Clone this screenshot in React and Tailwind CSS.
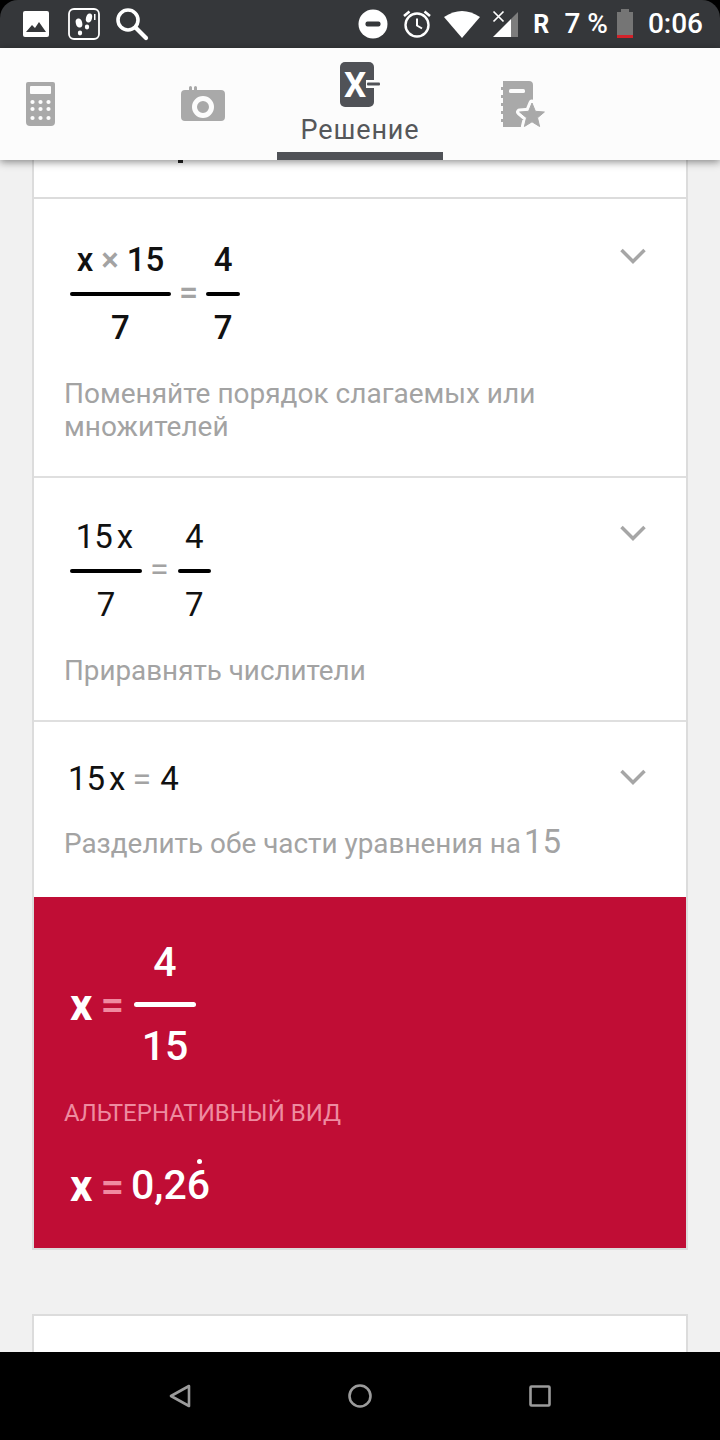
import React from "react";

const font = { fontFamily: "Roboto, sans-serif" };

function Frac({ num, den, w, numCls, denCls }) {
  return (
    <div className="flex flex-col items-center" style={{ width: w }}>
      <div className={`h-[48px] flex items-center justify-center whitespace-nowrap ${numCls}`}>{num}</div>
      <div className="h-[4px] w-full rounded-full bg-black" />
      <div className={`flex items-center justify-center ${denCls}`}>{den}</div>
    </div>
  );
}

function Chevron({ cls }) {
  return (
    <svg width="26" height="16" viewBox="0 0 26 16" className={`shrink-0 ${cls}`}>
      <path d="M1.5 2 L13 13.5 L24.5 2" fill="none" stroke="#a6a6a6" strokeWidth="3.5" />
    </svg>
  );
}

function Row({ children, text, cls, chevCls, textCls }) {
  return (
    <div className={`bg-white pl-[30px] pr-[40px] flex items-start justify-between ${cls}`}>
      <div className="min-w-0">
        {children}
        <div className={`leading-[33px] text-[#a3a3a3] ${textCls}`}>{text}</div>
      </div>
      <Chevron cls={chevCls} />
    </div>
  );
}

function StatusBar() {
  return (
    <div className="h-12 bg-[#35373a] rounded-t-[18px] flex items-center text-white shrink-0">
      <div className="flex items-center pl-[22px] gap-[18px]">
        <svg width="28" height="28" viewBox="0 0 28 28">
          <rect x="1" y="1" width="26" height="26" rx="2" fill="#fff" />
          <path d="M4 22 L10 15 L13 18 L17 12 L24 22 Z" fill="#35373a" />
        </svg>
        <svg width="32" height="32" viewBox="0 0 32 32">
          <rect x="1" y="1" width="30" height="30" rx="5" fill="none" stroke="#fff" strokeWidth="1.8" />
          <ellipse cx="11" cy="15" rx="3.2" ry="4.6" fill="#fff" transform="rotate(-15 11 15)" />
          <ellipse cx="12" cy="25" rx="2.2" ry="2.4" fill="#fff" />
          <ellipse cx="21" cy="10" rx="3" ry="4.6" fill="#fff" transform="rotate(15 21 10)" />
          <ellipse cx="19" cy="19" rx="2.2" ry="2.4" fill="#fff" />
          <rect x="26" y="6" width="1.5" height="6" fill="#fff" />
        </svg>
        <svg width="34" height="34" viewBox="0 0 34 34" className="-ml-[3px]">
          <circle cx="13" cy="13" r="10" fill="none" stroke="#fff" strokeWidth="3.6" />
          <path d="M20.5 20.5 L31 31" stroke="#fff" strokeWidth="4.2" strokeLinecap="round" />
        </svg>
      </div>
      <div className="ml-auto flex items-center pr-[17px]">
        <svg width="30" height="30" viewBox="0 0 30 30">
          <circle cx="15" cy="15" r="14.5" fill="#fff" />
          <rect x="7.5" y="12.5" width="15" height="5" rx="2" fill="#35373a" />
        </svg>
        <svg width="30" height="30" viewBox="0 0 30 30" className="ml-[14px]">
          <circle cx="15" cy="16" r="11.5" fill="none" stroke="#fff" strokeWidth="2.4" />
          <path d="M15 9.5 V16.5 L20 19.5" fill="none" stroke="#fff" strokeWidth="2" />
          <path d="M2 7 L7.5 2.5 M28 7 L22.5 2.5" stroke="#fff" strokeWidth="2.6" />
        </svg>
        <svg width="36" height="28" viewBox="0 0 36 28" className="ml-[12px]">
          <path d="M0 7 Q18 -5 36 7 L18 28 Z" fill="#fff" />
        </svg>
        <svg width="28" height="28" viewBox="0 0 28 28" className="ml-[12px]">
          <path d="M1 27 L19 9 V27 Z" fill="#fff" />
          <path d="M19 9 L26 2 V27 H19 Z" fill="#7d7d7d" />
          <path d="M1.5 1.5 L11.5 11.5 M11.5 1.5 L1.5 11.5" stroke="#fff" strokeWidth="1.7" />
        </svg>
        <span className="ml-[13px] text-[25px] font-bold leading-none">R</span>
        <span className="ml-[15px] text-[28px] font-medium leading-none whitespace-nowrap">7 %</span>
        <svg width="16" height="30" viewBox="0 0 16 30" className="ml-[9px]">
          <rect x="4" y="0" width="8" height="3" fill="#757575" />
          <rect x="0" y="3" width="16" height="25" fill="#757575" />
          <rect x="0" y="26" width="16" height="3" fill="#d3222a" />
        </svg>
        <span className="ml-[15px] text-[28px] font-medium leading-none">0:06</span>
      </div>
    </div>
  );
}

function Header() {
  return (
    <div className="h-[112px] bg-[#fcfcfc] shadow-[0_2px_8px_rgba(0,0,0,0.45)] relative z-10 flex shrink-0">
      <div className="w-[120px] pl-[26px] pt-[34px]">
        <svg width="29" height="44" viewBox="0 0 29 44">
          <path d="M0 2 Q0 0 2 0 H27 Q29 0 29 2 V40 Q29 44 25 44 H4 Q0 44 0 40 Z" fill="#a9a9a9" />
          <rect x="4" y="4" width="21" height="8" rx="1" fill="#fcfcfc" />
          {[20, 27, 36].map((y) => [6.5, 14.5, 22.5].map((x) => <circle key={`${x}-${y}`} cx={x} cy={y} r="2.1" fill="#fcfcfc" />))}
        </svg>
      </div>
      <div className="w-[157px] pl-[61px] pt-[38px]">
        <svg width="44" height="36" viewBox="0 0 44 36">
          <path d="M4 4 H8 V1.5 a1.5 1.5 0 0 1 3 0 V4 H13 V1.5 a1.5 1.5 0 0 1 3 0 V4 H40 Q44 4 44 8 V31 Q44 35 40 35 H4 Q0 35 0 31 V8 Q0 4 4 4 Z" fill="#a9a9a9" />
          <circle cx="22" cy="21" r="8.5" fill="none" stroke="#fcfcfc" strokeWidth="5" />
        </svg>
      </div>
      <div className="w-[166px] flex flex-col items-center relative">
        <svg width="42" height="45" viewBox="0 0 42 45" className="mt-[14px] ml-[1px]">
          <rect x="0" y="0" width="34" height="45" rx="5" fill="#505257" />
          <text x="4" y="35" fontFamily="Roboto, sans-serif" fontWeight="700" fontSize="35" fill="#fff">X</text>
          <rect x="26" y="18" width="8" height="8" fill="#fcfcfc" />
          <rect x="27" y="20.5" width="13" height="3" rx="1" fill="#505257" />
        </svg>
        <div className="mt-[6px] text-[27px] leading-[34px] tracking-[0.9px] text-[#55575a]">Решение</div>
        <div className="absolute left-0 right-0 bottom-0 h-2 bg-[#505257]" />
      </div>
      <div className="pl-[58px] pt-[33px]">
        <svg width="46" height="47" viewBox="0 0 46 47">
          <path d="M2 0 H28 Q32 0 32 4 V40 H24 V46 H2 V41 H0 V38 H2 V33 H0 V30 H2 V25 H0 V22 H2 V17 H0 V14 H2 V9 H0 V6 H2 Z" fill="#a9a9a9" />
          <rect x="8" y="8" width="16" height="4" rx="1.6" fill="#fcfcfc" />
          <polygon points="31,22 34.4,30.3 43.4,31 36.5,36.8 38.6,45.5 31,40.8 23.4,45.5 25.5,36.8 18.6,31 27.6,30.3" fill="#fcfcfc" stroke="#fcfcfc" strokeWidth="7" strokeLinejoin="round" />
          <polygon points="31,22 34.4,30.3 43.4,31 36.5,36.8 38.6,45.5 31,40.8 23.4,45.5 25.5,36.8 18.6,31 27.6,30.3" fill="#a9a9a9" stroke="#a9a9a9" strokeWidth="1" strokeLinejoin="round" />
        </svg>
      </div>
    </div>
  );
}

function Nav() {
  return (
    <div className="h-[88px] bg-black flex items-center justify-center shrink-0 gap-[156px]">
      <svg width="24" height="26" viewBox="0 0 24 26">
        <path d="M21 3 L3 13 L21 23 Z" fill="none" stroke="#9b9b9b" strokeWidth="2.6" strokeLinejoin="round" />
      </svg>
      <svg width="24" height="26" viewBox="0 0 24 26">
        <circle cx="12" cy="13" r="10.5" fill="none" stroke="#9b9b9b" strokeWidth="2.6" />
      </svg>
      <svg width="24" height="26" viewBox="0 0 24 26">
        <rect x="2.5" y="3.5" width="19" height="19" rx="1" fill="none" stroke="#9b9b9b" strokeWidth="2.6" />
      </svg>
    </div>
  );
}

const gray = "text-[#a3a3a3]";

export default function App() {
  return (
    <div className="w-[720px] h-[1440px] bg-black flex flex-col overflow-hidden" style={font}>
      <StatusBar />
      <Header />
      <div className="flex-1 bg-[#f1f1f1] px-[32px] overflow-hidden">
        <div className="border-x-2 border-b-2 border-[#dcdcdc]">
          <div className="h-[39px] bg-white border-b-2 border-[#dcdcdc] pl-[144px]">
            <div className="w-[5px] h-[3px] bg-[#222]" />
          </div>

          <Row
            cls="h-[279px] pt-[37px] border-b-2 border-[#dfdfdf]"
            chevCls="mt-[12px]"
            textCls="text-[28px]"
            text={<>Поменяйте порядок слагаемых или<br />множителей</>}
          >
            <div className="flex items-start ml-[6px] mb-[17px] text-[33px] font-medium text-[#111]">
              <Frac w={101} numCls="mb-[8px]" denCls="h-[64px]" num={<><span>x</span><span className={`mx-[8px] ${gray}`}>×</span><span>15</span></>} den="7" />
              <div className={`mt-[36px] mx-[8px] text-[34px] leading-[40px] ${gray}`}>=</div>
              <Frac w={34} numCls="mb-[8px]" denCls="h-[64px]" num="4" den="7" />
            </div>
          </Row>

          <Row cls="h-[244px] pt-[35px] border-b-2 border-[#dfdfdf]" chevCls="mt-[12px]" textCls="text-[27.8px]" text="Приравнять числители">
            <div className="flex items-start ml-[6px] mb-[17px] text-[33px] text-[#111]">
              <Frac w={72} numCls="mb-[8px] mr-[3px]" denCls="h-[64px]" num={<><span>15</span><span className="ml-[4px]">x</span></>} den="7" />
              <div className={`mt-[36px] ml-[8px] mr-[9px] text-[34px] leading-[40px] ${gray}`}>=</div>
              <Frac w={33} numCls="mb-[8px]" denCls="h-[64px]" num="4" den="7" />
            </div>
          </Row>

          <Row
            cls="h-[175px] pt-[36px]"
            chevCls="mt-[11px]"
            textCls="text-[27.9px]"
            text={<>Разделить обе части уравнения на<span className="text-[33px] ml-[3px]">15</span></>}
          >
            <div className="flex items-center ml-[4px] mb-[25px] h-[42px] text-[33px] text-[#111]">
              <span>15</span><span className="ml-[4px]">x</span>
              <span className={`ml-[7px] mr-[9px] text-[34px] ${gray}`}>=</span><span>4</span>
            </div>
          </Row>

          <div className="h-[351px] bg-[#c00d35] pl-[30px] pt-[41px]">
            <div className="flex items-center ml-[6px] text-white font-medium text-[41px]">
              <span className="text-[44px] font-bold">x</span>
              <span className="ml-[8px] mr-[10px] text-[#f08aa0] text-[42px]">=</span>
              <div className="w-[62px] flex flex-col items-center">
                <div className="h-[50px] flex items-center">4</div>
                <div className="w-full h-[5px] bg-white rounded-full my-[14px]" />
                <div className="h-[50px] flex items-center pt-[2px]">15</div>
              </div>
            </div>
            <div className="mt-[26px] text-[24px] leading-[32px] text-[#ee8ba0] whitespace-nowrap">АЛЬТЕРНАТИВНЫЙ ВИД</div>
            <div className="mt-[33px] ml-[6px] flex items-center text-white font-medium text-[41px] h-[48px]">
              <span className="text-[44px] font-bold">x</span>
              <span className="ml-[8px] mr-[7px] text-[#f08aa0] text-[42px]">=</span>
              <span className="relative">0,26
                <span className="absolute right-[8px] top-[4px] w-[5px] h-[5px] rounded-full bg-white" />
              </span>
            </div>
          </div>
        </div>
        <div className="mt-[64px] h-[80px] bg-white border-x-2 border-t-2 border-[#dcdcdc]" />
      </div>
      <Nav />
    </div>
  );
}
